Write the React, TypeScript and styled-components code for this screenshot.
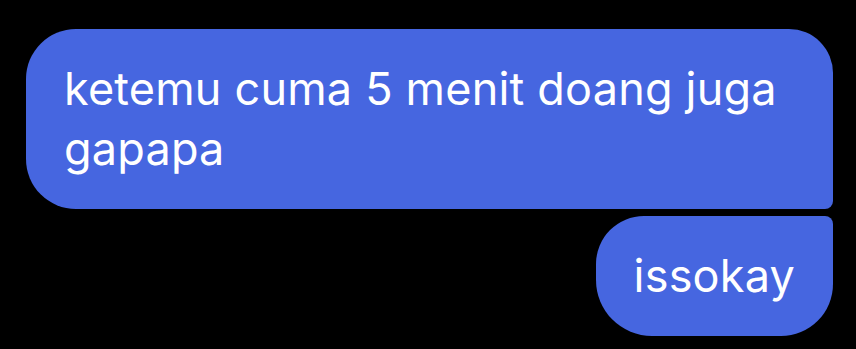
import React from "react";
import styled, { createGlobalStyle } from "styled-components";

const Global = createGlobalStyle`
  html, body { margin: 0; padding: 0; background: #000; }
  body { font-family: Inter, "Noto Sans", "Liberation Sans", sans-serif; }
`;

const Thread = styled.div`
  display: flex;
  flex-direction: column;
  align-items: flex-end;
  gap: 7px;
  padding: 29px 23px 14px 26px;
  background: #000;
  min-height: 349px;
  box-sizing: border-box;
`;

const Bubble = styled.div<{ $tail: "bottom" | "top" }>`
  box-sizing: border-box;
  max-width: 807px;
  background: #4666e0;
  color: #fff;
  font-size: 45px;
  line-height: 60px;
  letter-spacing: 0.2px;
  padding: 30px 38px 30px 38px;
  border-radius: ${(p) =>
    p.$tail === "bottom" ? "50px 44px 8px 50px" : "48px 8px 52px 56px"};
`;

export default function App() {
  return (
    <>
      <Global />
      <Thread>
        <Bubble $tail="bottom">ketemu cuma 5 menit doang juga gapapa</Bubble>
        <Bubble $tail="top">issokay</Bubble>
      </Thread>
    </>
  );
}
